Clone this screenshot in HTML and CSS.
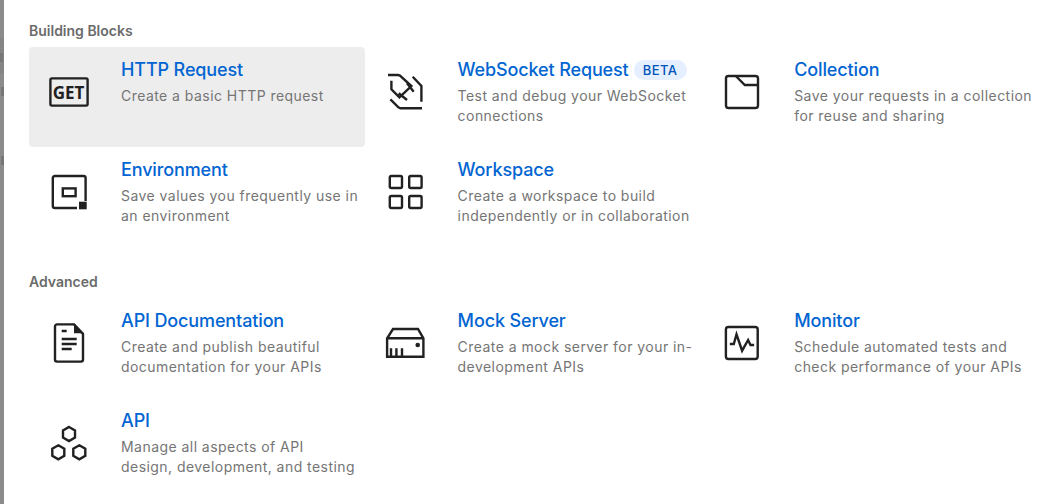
FILE: index.html
```html
<!DOCTYPE html>
<html lang="en">
<head>
  <meta charset="UTF-8" />
  <title>Create New</title>
  <link rel="stylesheet" href="styles.css">
</head>
<body>
  <div class="scrim">
    <div class="scrim-band"><span class="ghost"></span></div>
    <span class="ghost ghost-c"></span>
    <span class="ghost ghost-a"></span>
  </div>
  <main class="panel">
    <h2 class="section-title">Building Blocks</h2>
    <div class="grid">
      <a class="item active">
        <span class="item-icon">
          <svg viewBox="0 0 40 40" width="40" height="40"><rect x="1.400" y="8.400" width="37.200" height="27.200" rx="1.500" class="ln"/><text x="19.500" y="28.700" class="get">GET</text></svg>
        </span>
        <span class="item-body">
          <span class="item-title">HTTP Request</span>
          <span class="item-desc">Create a basic HTTP request</span>
        </span>
      </a>
      <a class="item">
        <span class="item-icon">
          <svg viewBox="0 0 40 40" width="40" height="40"><path class="ln" d="M2 5h10l2 .5L25.400 16 13.400 27.300l-8-8v-8.600M21 13.300l6.700 8.400M12.700 23.300l8.300 6.700M26.700 6.700l8.700 9.300v15.700M4.400 29.300l8 8 2 1H36"/></svg>
        </span>
        <span class="item-body">
          <span class="item-title">WebSocket Request<span class="badge">BETA</span></span>
          <span class="item-desc">Test and debug your WebSocket connections</span>
        </span>
      </a>
      <a class="item">
        <span class="item-icon">
          <svg viewBox="0 0 40 40" width="40" height="40"><rect x="4" y="6" width="32" height="32" rx="2.500" class="ln"/><path class="ln" d="M13.800 6l9 9h13"/></svg>
        </span>
        <span class="item-body">
          <span class="item-title">Collection</span>
          <span class="item-desc">Save your requests in a collection for reuse and sharing</span>
        </span>
      </a>
      <a class="item">
        <span class="item-icon">
          <svg viewBox="0 0 40 40" width="40" height="40"><path class="ln" d="M36.600 31V8a2 2 0 0 0-2-2H5.800a2 2 0 0 0-2 2v28a2 2 0 0 0 2 2H28"/><rect x="13.800" y="18.400" width="12.800" height="7.800" class="ln"/><rect x="30" y="31.700" width="7.700" height="7.600" class="fill"/></svg>
        </span>
        <span class="item-body">
          <span class="item-title">Environment</span>
          <span class="item-desc">Save values you frequently use in an environment</span>
        </span>
      </a>
      <a class="item">
        <span class="item-icon">
          <svg viewBox="0 0 40 40" width="40" height="40"><rect x="3.800" y="6" width="12.200" height="12" rx="1.500" class="ln"/><rect x="23.200" y="6" width="12.400" height="12" rx="1.500" class="ln"/><rect x="3.800" y="26" width="12.200" height="12" rx="1.500" class="ln"/><rect x="23.200" y="26" width="12.400" height="12" rx="1.500" class="ln"/></svg>
        </span>
        <span class="item-body">
          <span class="item-title">Workspace</span>
          <span class="item-desc">Create a workspace to build independently or in collaboration</span>
        </span>
      </a>
    </div>

    <h2 class="section-title second">Advanced</h2>
    <div class="grid">
      <a class="item">
        <span class="item-icon">
          <svg viewBox="0 0 40 40" width="40" height="40"><path class="ln" d="M8 3.400h17l9 9.500V38.600a2 2 0 0 1-2 2H8a2 2 0 0 1-2-2V5.400a2 2 0 0 1 2-2z"/><path class="fill" d="M25 2.300l10 10H25z"/><path class="ln" d="M12.700 10h5M12.700 18h15M12.700 23h15M12.700 28h10"/></svg>
        </span>
        <span class="item-body">
          <span class="item-title">API Documentation</span>
          <span class="item-desc">Create and publish beautiful documentation for your APIs</span>
        </span>
      </a>
      <a class="item">
        <span class="item-icon">
          <svg viewBox="0 0 40 40" width="40" height="40"><path class="ln" d="M7 8h25l5.400 9.300v18.400H1.100V17.300zM1.100 17.300h36.300M5 35.700v-8.400M10.400 35.700v-8.400M16 35.700v-8.400"/><circle cx="31.700" cy="24" r="2.300" class="fill"/></svg>
        </span>
        <span class="item-body">
          <span class="item-title">Mock Server</span>
          <span class="item-desc">Create a mock server for your in-development APIs</span>
        </span>
      </a>
      <a class="item">
        <span class="item-icon">
          <svg viewBox="0 0 40 40" width="40" height="40"><rect x="3.900" y="6" width="31.800" height="32" rx="2.500" class="ln"/><path class="ln" d="M7.800 23h4l2.700-9.700 5.600 16.400 6-10.700 2.400 5h3.600"/></svg>
        </span>
        <span class="item-body">
          <span class="item-title">Monitor</span>
          <span class="item-desc">Schedule automated tests and check performance of your APIs</span>
        </span>
      </a>
      <a class="item">
        <span class="item-icon">
          <svg viewBox="0 0 40 40" width="40" height="40"><path class="ln" d="M20 6l6 3.500v7L20 20l-6-3.500v-7zM9.300 24.300l6 3.500v7l-6 3.500-6-3.500v-7zM30.300 24.300l6 3.500v7l-6 3.500-6-3.500v-7z"/></svg>
        </span>
        <span class="item-body">
          <span class="item-title">API</span>
          <span class="item-desc">Manage all aspects of API design, development, and testing</span>
        </span>
      </a>
    </div>
  </main>
</body>
</html>
```

FILE: styles.css
```css
*{margin:0;padding:0;box-sizing:border-box;}
html, body {height:100%; overflow:hidden;}
body {display:flex; background:#fff; font-family:'Inter',sans-serif;}

/* strip of the dimmed page behind the panel */
.scrim {width:4px; flex:none; background:#8b8b8b; padding-top:38px; display:flex; flex-direction:column; align-items:flex-end;}
.scrim-band {width:4px; height:35px; background:#858585; padding-top:15px;}
.ghost {display:block; width:3px; height:9px; background:#777;}
.ghost-c {margin-top:14px;}
.ghost-a {margin-top:60px;}

.panel {flex:1; padding:22px 0 0 25px;}
.section-title {font-size:14px; line-height:18px; font-weight:600; color:#6b6b6b; margin-bottom:7px;}
.section-title.second {margin-top:26px; margin-bottom:7px;}

.grid {display:grid; grid-template-columns:repeat(3, 336.6px); grid-auto-rows:100px;}

.item {display:flex; padding:12px 6.600px 0 20px; border-radius:4px; cursor:pointer;}
.item.active {background:#ededed; margin-right:1px; padding-right:5.600px;}

.item-icon {flex:none; width:40px; height:40px; margin:11px 32px 0 0; display:flex; align-items:center;}
.item-icon svg {display:block; overflow:visible;}

.item-body {display:flex; flex-direction:column; min-width:0;}
.item-title {font-size:18px; line-height:22px; font-weight:500; color:#0265d2; display:flex; align-items:center; letter-spacing:-0.13px;}
.item-desc {font-size:14px; line-height:20px; color:#757575; margin-top:5px; letter-spacing:0.45px;}

.badge {font-size:13px; line-height:20px; font-weight:500; color:#0053b8; background:#e5efff; border-radius:10px; padding:0 9px; margin-left:5px; letter-spacing:0.5px;}

.ln {fill:none; stroke:#212121; stroke-width:2.400;}
.fill {fill:#212121;}
.get {font-family:'Open Sans',sans-serif; font-weight:700; font-size:17px; text-anchor:middle; fill:#212121;}
```
